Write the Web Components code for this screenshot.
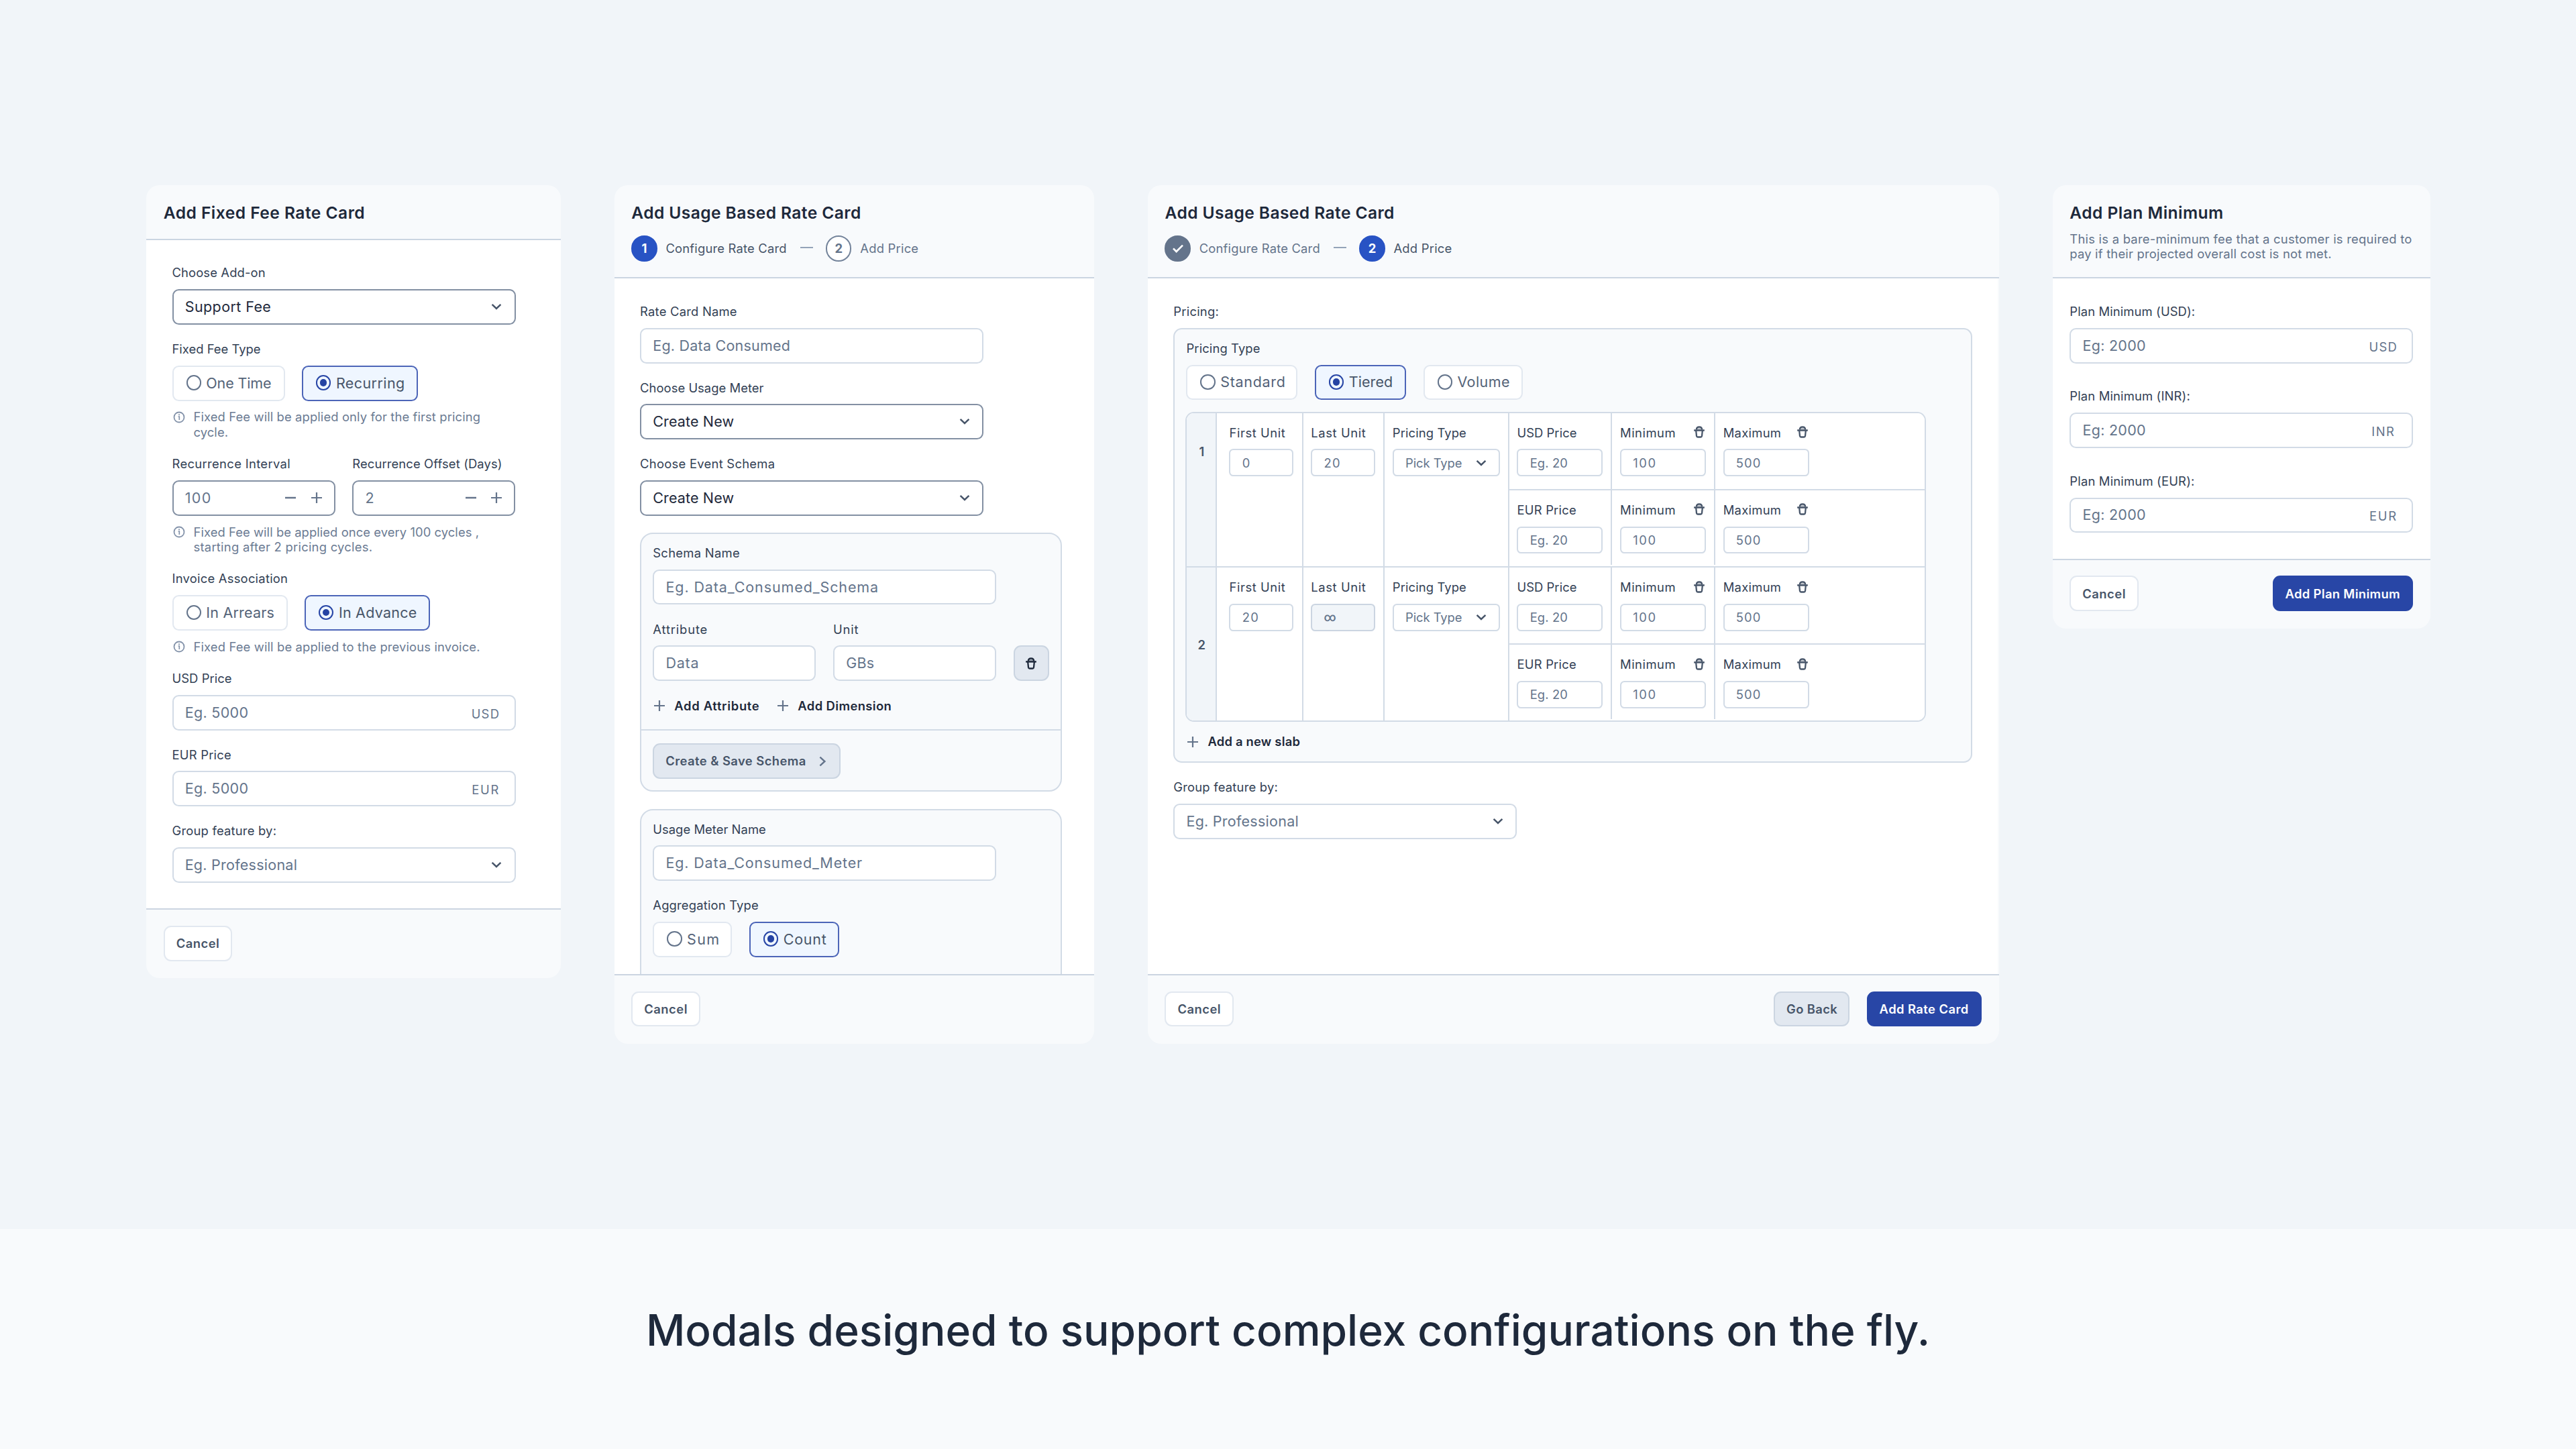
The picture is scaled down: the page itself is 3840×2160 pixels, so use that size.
<!DOCTYPE html>
<html lang="en">
<head>
<meta charset="utf-8">
<title>Rate card modals</title>
<style>
html,body{margin:0;height:100%;background:#f1f5f9}
body{font-family:Inter,Roboto,sans-serif;color:#334155}
</style>
</head>
<body>
<modal-showcase></modal-showcase>
<script>
const fits = new Set();

function define(name, css, html, hooks = {}) {
  customElements.define(name, class extends HTMLElement {
    constructor() {
      super();
      this.attachShadow({ mode: 'open' }).innerHTML =
        `<style>*{box-sizing:border-box}${css}</style>${typeof html === 'function' ? html(this) : html}`;
    }
    connectedCallback() { if (hooks.connected) hooks.connected(this); }
  });
}

/* A single line of text, tracked so that it runs to the width in its "w" attribute. */
define('fit-text',
  ':host{display:block;white-space:nowrap}span{display:inline-block}',
  '<span><slot></slot></span>',
  { connected: el => fits.add(el) });

function fitAll() {
  for (const el of fits) {
    const w = parseFloat(el.getAttribute('w'));
    const n = el.textContent.length;
    if (!w || n < 2) continue;
    const span = el.shadowRoot.querySelector('span');
    const size = parseFloat(getComputedStyle(el).fontSize);
    const ls = (w + size * 0.08 - span.getBoundingClientRect().width) / (n - 1);
    span.style.letterSpacing = ls.toFixed(3) + 'px';
    span.style.marginRight = (-ls).toFixed(3) + 'px';
  }
}

const icons = {
  down: [32, '<path d="M9.6 12.8 16 19l6.4-6.2" stroke-width="2.5"/>'],
  right: [24, '<path d="M8.4 5.6 15.4 12l-7 6.4" stroke-width="2.4"/>'],
  plus: [20, '<path d="M2 10h16M10 2v16" stroke-width="2.2"/>'],
  minus: [20, '<path d="M2 10h16" stroke-width="2.5"/>'],
  check: [24, '<path d="M5 12.4 9.6 17 19 7.6" stroke-width="2.7"/>'],
  info: [20, '<circle cx="10" cy="10" r="7.5" stroke-width="1.8"/><path d="M8.6 9h1.7v5" stroke-width="1.7"/><circle cx="10" cy="6.3" r="1.1" fill="currentColor" stroke="none"/>'],
  trash: [20, '<path d="M5.8 6.4C6 3.4 7.4 2.4 10 2.4s4 1 4.2 4" stroke-width="2.3" fill="currentColor" fill-opacity=".35"/><path d="M2.2 7.4h15.6" stroke-width="2.5"/><path d="M5.2 8l.8 7.8c.2 1.3.9 1.7 1.8 1.7h4.4c.9 0 1.6-.4 1.8-1.7l.8-7.8" stroke-width="2.3"/>']
};
define('ui-icon',
  ':host{display:inline-flex;flex:none}svg{display:block;fill:none;stroke:currentColor}',
  el => {
    const [s, body] = icons[el.getAttribute('name')] || icons.plus;
    return `<svg width="${s}" height="${s}" viewBox="0 0 ${s} ${s}">${body}</svg>`;
  });

define('modal-card', `
  :host{display:flex;flex-direction:column;flex:none;border-radius:20px;overflow:hidden;background:#f8fafc}
  header{display:flex;flex-direction:column;flex:none;height:var(--head,81.6px);padding:25.6px;border-bottom:2px solid #cbd5e1}
  main{flex:1;min-height:0;overflow:hidden;background:#fff;padding:38.4px var(--side,38.4px);margin-right:var(--trim,0);display:flex;flex-direction:column;gap:var(--gap,25.6px)}
  footer{display:flex;justify-content:space-between;flex:none;height:104px;padding:23.6px 25.6px 0;border-top:2px solid #cbd5e1}`,
  '<header><slot name="head"></slot></header><main><slot></slot></main><footer><slot name="foot"></slot></footer>');

define('modal-title', ':host{display:block;font-size:24.6px;line-height:30.4px;font-weight:600;color:#1e293b}', '<slot></slot>');
define('modal-note', ':host{display:block;margin-top:12.8px;font-size:18.4px;line-height:22.4px;color:#64748b}', '<slot></slot>');

define('step-list', ':host{display:flex;align-items:center;margin-top:19.2px;height:38.4px}', '<slot></slot>');
define('step-dash', ':host{display:block;width:19.2px;height:2px;margin:-2px 19px 0 20.4px;background:#94a3b8}', '');
define('step-item', `
  :host{display:flex;align-items:center;gap:12.8px;font-size:18.4px;line-height:22.4px;color:#64748b}
  :host([state=current]){color:#475569}
  i{display:flex;align-items:center;justify-content:center;width:38.4px;height:38.4px;border-radius:50%;font-style:normal;font-weight:650;background:#fff;border:2px solid #73839a}
  :host([state=current]) i{background:#2853c4;border-color:#2853c4;color:#fff}
  :host([state=done]) i{background:#64748b;border-color:#64748b;color:#fff}`,
  el => `<i>${el.getAttribute('state') === 'done' ? '<ui-icon name="check"></ui-icon>' : el.getAttribute('n')}</i><slot></slot>`);

define('form-field', `
  :host{display:flex;flex-direction:column;gap:12.8px}
  .l{font-size:18.4px;line-height:22.4px;height:22.4px;color:#334155;display:flex;justify-content:space-between}
  .l fit-text{margin-top:-.5px}
  .c{display:flex;gap:25.6px}
  ::slotted(ui-icon){color:#475569}`,
  el => `<div class="l"><fit-text w="${el.getAttribute('w')}">${el.getAttribute('label')}</fit-text><slot name="act"></slot></div><div class="c"><slot></slot></div><slot name="hint"></slot>`);

define('field-row', ':host{display:flex;gap:25.6px;align-items:flex-end}', '<slot></slot>');

define('text-box', `
  :host{display:flex;align-items:center;width:512px;height:52.8px;padding:0 17.2px 1px;border:2px solid #d2dbe6;border-radius:9.6px;background:#fff;font-size:21.5px;line-height:26px;color:#64748b;box-sizing:border-box}
  :host([half]){width:243.2px}
  :host([filled]){border-color:#8390a3}
  :host([dark]){color:#1e293b}
  :host([small]){width:128px;height:40.8px;font-size:18.4px;border-radius:6.4px;padding-right:10px;padding-bottom:0}
  :host([narrow]){width:96px}
  :host([muted]){background:#f1f5f9;border-color:#cbd5e1}
  :host([muted]) {font:500 17.5px/26px Roboto,sans-serif}
  .r{margin-left:auto;display:flex;align-items:center;color:#64748b}
  .cur{width:54px;display:flex;justify-content:center;font-size:18.4px;padding-top:4px;margin-right:-1px}
  .st{gap:18.3px;margin-right:-1px}
  .dn{margin-right:-7px;color:#475569}
  :host([small]) .dn{margin-right:0}`,
  el => {
    const k = el.getAttribute('kind');
    const r = k === 'select' ? '<div class="r dn"><ui-icon name="down"></ui-icon></div>'
      : k === 'stepper' ? '<div class="r st"><ui-icon name="minus"></ui-icon><ui-icon name="plus"></ui-icon></div>'
      : k ? `<div class="r cur"><fit-text w="${{ USD: 39.8, EUR: 38.6, INR: 32 }[k]}">${k}</fit-text></div>` : '';
    return `<slot></slot>${r}`;
  });

define('radio-option', `
  :host{display:flex;align-items:center;height:52.8px;padding:0 0 1px 19px;border:2px solid #e2e8f0;border-radius:9.6px;background:#fff;font-size:21.5px;line-height:26px;color:#546378;box-sizing:border-box}
  i{width:22.4px;height:22.4px;border:2.6px solid #64748b;border-radius:50%;margin-right:7.4px;display:flex;align-items:center;justify-content:center}
  :host([on]){border-color:#4c65b8;background:#eff6ff;color:#475569}
  :host([on]) i{border-color:#2846a6}
  :host([on]) i::before{content:"";width:10.4px;height:10.4px;border-radius:50%;background:#2543a3}`,
  '<i></i><slot></slot>');

define('hint-note', `
  :host{display:flex;font-size:18.4px;line-height:22.4px;color:#6b7b93}
  ui-icon{margin-top:1.2px;margin-right:12px;color:#8493aa}`,
  '<ui-icon name="info"></ui-icon><div><slot></slot></div>');

define('ui-button', `
  :host{display:flex;align-items:center;height:52.8px;padding-left:17px;border:2px solid #e2e8f0;border-radius:11px;background:#fff;font-size:18.4px;line-height:22.4px;font-weight:600;color:#475569;box-sizing:border-box}
  :host([look=soft]){background:#e2e8f0;border-color:#cbd5e1}
  :host([look=primary]){background:#2846a6;border-color:#2846a6;color:#fff}
  :host([look=trash]){width:52.8px;padding:0;justify-content:center;background:#e2e8f0;border-color:#cbd5e1;color:#1e293b}`,
  '<slot></slot>');
define('button-row', ':host{display:flex;gap:25.6px}', '<slot></slot>');

define('add-link', `
  :host{display:flex;align-items:center;font-size:18.4px;line-height:22.4px;font-weight:600;color:#1e293b}
  ui-icon{color:#64748b;margin-right:12px}`,
  '<ui-icon name="plus"></ui-icon><slot></slot>');

define('schema-panel', `
  :host{display:flex;flex-direction:column;flex:none;width:628.8px;border:2px solid #d2dbe6;border-radius:19.2px;background:#f8fafc;box-sizing:border-box}
  .b{display:flex;flex-direction:column;gap:25.6px;padding:17.2px 17.2px 24px}
  .f{display:flex;border-top:2px solid #d2dbe6;padding:19.2px 17.2px 17.2px}
  :host(:not([foot])) .f{display:none}`,
  '<div class="b"><slot></slot></div><div class="f"><slot name="foot"></slot></div>');

define('pricing-panel', `
  :host{display:flex;flex-direction:column;align-items:flex-start;height:648.4px;width:1190.4px;padding:17.6px 17.2px 0;border:2px solid #d2dbe6;border-radius:12.8px;background:#f8fafc;box-sizing:border-box}
  slab-table{margin-top:17.2px;margin-left:-1.2px}
  add-link{margin-top:18px}`, `
  <form-field label="Pricing Type" w="108.5">
    <radio-option style="width:166px"><fit-text w="95">Standard</fit-text></radio-option>
    <radio-option on style="width:136px"><fit-text w="63.6">Tiered</fit-text></radio-option>
    <radio-option style="width:148.8px"><fit-text w="76.4">Volume</fit-text></radio-option>
  </form-field>
  <slab-table></slab-table>
  <add-link><fit-text w="136">Add a new slab</fit-text></add-link>`);

define('price-row', `
  :host{display:flex;height:113.2px;flex:none}
  div{width:153.6px;border-right:2px solid #d2dbe6;padding:18.6px 0 0 11.6px}
  div:last-child{flex:1;border:0}
  form-field{width:128px}`,
  el => {
    const c = el.getAttribute('cur');
    return `<div><form-field label="${c} Price" w="${c === 'USD' ? 87.5 : 86.8}"><text-box small><fit-text w="54.8">Eg. 20</fit-text></text-box></form-field></div>
    <div><form-field label="Minimum" w="81"><ui-icon slot="act" name="trash"></ui-icon><text-box small><fit-text w="32.3">100</fit-text></text-box></form-field></div>
    <div><form-field label="Maximum" w="84.8"><ui-icon slot="act" name="trash"></ui-icon><text-box small><fit-text w="35">500</fit-text></text-box></form-field></div>`;
  });

define('slab-row', `
  :host{display:flex;height:228.4px;flex:none;background:#fff}
  :host(:not([n="1"])){border-top:2px solid #d2dbe6;height:230.4px;box-sizing:border-box}
  .c{border-right:2px solid #d2dbe6;padding:18.6px 0 0 11.6px;flex:none}
  .n{width:45px;background:#f1f5f9;padding:2px 0 0 1px;display:flex;align-items:center;justify-content:center;font-size:18.4px;line-height:22.4px;font-weight:600;color:#475569}
  :host([n="1"]) .n{align-items:flex-start;padding-top:46px}
  .p{flex:1;display:flex;flex-direction:column}
  price-row+price-row{border-top:2px solid #d2dbe6}`,
  el => {
    const first = el.getAttribute('n') === '1';
    const box = (v, x = '') => `<text-box small narrow ${x}><fit-text w="${v === '20' ? 22.8 : ''}">${v}</fit-text></text-box>`;
    return `<div class="c n">${el.getAttribute('n')}</div>
    <div class="c" style="width:128.4px;padding-left:18.2px"><form-field label="First Unit" w="81.8">${box(first ? '0' : '20')}</form-field></div>
    <div class="c" style="width:121.6px"><form-field label="Last Unit" w="80">${first ? box('20') : box('∞', 'muted')}</form-field></div>
    <div class="c" style="width:185.6px"><form-field label="Pricing Type" w="108.5"><text-box small kind="select" style="width:160px"><fit-text w="83">Pick Type</fit-text></text-box></form-field></div>
    <div class="p"><price-row cur="USD"></price-row><price-row cur="EUR"></price-row></div>`;
  });

define('slab-table',
  ':host{display:flex;flex-direction:column;width:1103.6px;height:462.8px;border:2px solid #d2dbe6;border-radius:12.8px;overflow:hidden;background:#fff;box-sizing:border-box;flex:none}',
  '<slab-row n="1"></slab-row><slab-row n="2"></slab-row>');

define('page-caption', `
  :host{display:flex;justify-content:center;flex:1;padding-top:112px;background:#f8fafc;box-sizing:border-box;font:500 64px/78px Inter,sans-serif;color:#1e293b}`,
  '<slot></slot>');

define('form-field-pair',
  ':host{display:flex;flex-direction:column;gap:12.8px}', `
  <field-row>
    <form-field label="Recurrence Interval" w="174.7"><text-box half kind="stepper" filled><fit-text w="37">100</fit-text></text-box></form-field>
    <form-field label="Recurrence Offset (Days)" w="221.8"><text-box half kind="stepper" filled><fit-text>2</fit-text></text-box></form-field>
  </field-row>
  <hint-note><fit-text w="424">Fixed Fee will be applied once every 100 cycles ,</fit-text><fit-text w="265">starting after 2 pricing cycles.</fit-text></hint-note>`);

define('modal-showcase', `
  :host{display:flex;flex-direction:column;width:3840px;height:2160px;overflow:hidden}
  .stage{display:flex;align-items:flex-start;justify-content:center;gap:80px;height:1832px;padding:276px 0 0 1px;background:#f1f5f9}
  .fixed{width:617.6px;height:1182.4px}
  .usage{width:715.2px;height:1280px;--head:139.2px}
  .price{width:1268.8px;height:1280px;--head:139.2px;--trim:1.6px}
  .plan{width:563.2px;height:660.8px;--head:139.2px;--side:25.6px;--gap:38.4px}
  ui-button[cancel]{width:102.4px}`, `
  <div class="stage">
    <modal-card class="fixed">
      <modal-title slot="head"><fit-text w="298">Add Fixed Fee Rate Card</fit-text></modal-title>
      <form-field label="Choose Add-on" w="137.6"><text-box kind="select" filled dark><fit-text w="126.5">Support Fee</fit-text></text-box></form-field>
      <form-field label="Fixed Fee Type" w="130.6">
        <radio-option style="width:168px"><fit-text w="95.5">One Time</fit-text></radio-option>
        <radio-option on style="width:173px"><fit-text w="100.6">Recurring</fit-text></radio-option>
        <hint-note slot="hint"><fit-text w="426">Fixed Fee will be applied only for the first pricing</fit-text><fit-text w="50">cycle.</fit-text></hint-note>
      </form-field>
      <form-field-pair></form-field-pair>
      <form-field label="Invoice Association" w="171">
        <radio-option style="width:172px"><fit-text w="99.8">In Arrears</fit-text></radio-option>
        <radio-option on style="width:187.2px"><fit-text w="114.6">In Advance</fit-text></radio-option>
        <hint-note slot="hint"><fit-text w="425.5">Fixed Fee will be applied to the previous invoice.</fit-text></hint-note>
      </form-field>
      <form-field label="USD Price" w="87.5"><text-box kind="USD"><fit-text w="92.6">Eg. 5000</fit-text></text-box></form-field>
      <form-field label="EUR Price" w="86.8"><text-box kind="EUR"><fit-text w="92.6">Eg. 5000</fit-text></text-box></form-field>
      <form-field label="Group feature by:" w="154"><text-box kind="select"><fit-text w="165.5">Eg. Professional</fit-text></text-box></form-field>
      <ui-button slot="foot" cancel><fit-text w="62.7">Cancel</fit-text></ui-button>
    </modal-card>

    <modal-card class="usage">
      <modal-title slot="head"><fit-text w="340">Add Usage Based Rate Card</fit-text></modal-title>
      <step-list slot="head">
        <step-item n="1" state="current"><fit-text w="178.5">Configure Rate Card</fit-text></step-item>
        <step-dash></step-dash>
        <step-item n="2"><fit-text w="85.4">Add Price</fit-text></step-item>
      </step-list>
      <form-field label="Rate Card Name" w="143"><text-box><fit-text w="203">Eg. Data Consumed</fit-text></text-box></form-field>
      <form-field label="Choose Usage Meter" w="183"><text-box kind="select" filled dark><fit-text w="119">Create New</fit-text></text-box></form-field>
      <form-field label="Choose Event Schema" w="199.5"><text-box kind="select" filled dark><fit-text w="119">Create New</fit-text></text-box></form-field>
      <schema-panel foot>
        <form-field label="Schema Name" w="128"><text-box><fit-text w="315">Eg. Data_Consumed_Schema</fit-text></text-box></form-field>
        <field-row>
          <form-field label="Attribute" w="79.6"><text-box half><fit-text w="47.4">Data</fit-text></text-box></form-field>
          <form-field label="Unit" w="36"><text-box half><fit-text w="40.2">GBs</fit-text></text-box></form-field>
          <ui-button look="trash"><ui-icon name="trash"></ui-icon></ui-button>
        </field-row>
        <field-row>
          <add-link><fit-text w="125">Add Attribute</fit-text></add-link>
          <add-link><fit-text w="138">Add Dimension</fit-text></add-link>
        </field-row>
        <ui-button slot="foot" look="soft" style="width:280px"><fit-text w="207.6">Create &amp; Save Schema</fit-text><ui-icon name="right" style="margin-left:12.4px;color:#64748b"></ui-icon></ui-button>
      </schema-panel>
      <schema-panel>
        <form-field label="Usage Meter Name" w="167"><text-box><fit-text w="291">Eg. Data_Consumed_Meter</fit-text></text-box></form-field>
        <form-field label="Aggregation Type" w="156">
          <radio-option style="width:118px"><fit-text w="46.4">Sum</fit-text></radio-option>
          <radio-option on style="width:134.4px"><fit-text w="62.4">Count</fit-text></radio-option>
        </form-field>
        <field-row style="height:80px"></field-row>
      </schema-panel>
      <ui-button slot="foot" cancel><fit-text w="62.7">Cancel</fit-text></ui-button>
    </modal-card>

    <modal-card class="price">
      <modal-title slot="head"><fit-text w="340">Add Usage Based Rate Card</fit-text></modal-title>
      <step-list slot="head">
        <step-item n="1" state="done"><fit-text w="178.5">Configure Rate Card</fit-text></step-item>
        <step-dash></step-dash>
        <step-item n="2" state="current"><fit-text w="85.4">Add Price</fit-text></step-item>
      </step-list>
      <form-field label="Pricing:" w="66"><pricing-panel></pricing-panel></form-field>
      <form-field label="Group feature by:" w="154"><text-box kind="select"><fit-text w="165.5">Eg. Professional</fit-text></text-box></form-field>
      <ui-button slot="foot" cancel><fit-text w="62.7">Cancel</fit-text></ui-button>
      <button-row slot="foot">
        <ui-button look="soft" style="width:113px"><fit-text w="74.3">Go Back</fit-text></ui-button>
        <ui-button look="primary" style="width:171.5px"><fit-text w="131.2">Add Rate Card</fit-text></ui-button>
      </button-row>
    </modal-card>

    <modal-card class="plan">
      <modal-title slot="head"><fit-text w="227">Add Plan Minimum</fit-text></modal-title>
      <modal-note slot="head"><fit-text w="508.5">This is a bare-minimum fee that a customer is required to</fit-text><fit-text w="388.8">pay if their projected overall cost is not met.</fit-text></modal-note>
      <form-field label="Plan Minimum (USD):" w="185.4"><text-box kind="USD"><fit-text w="92.4">Eg: 2000</fit-text></text-box></form-field>
      <form-field label="Plan Minimum (INR):" w="178"><text-box kind="INR"><fit-text w="92.4">Eg: 2000</fit-text></text-box></form-field>
      <form-field label="Plan Minimum (EUR):" w="184.6"><text-box kind="EUR"><fit-text w="92.4">Eg: 2000</fit-text></text-box></form-field>
      <ui-button slot="foot" cancel><fit-text w="62.7">Cancel</fit-text></ui-button>
      <ui-button slot="foot" look="primary" style="width:209.7px"><fit-text w="169.5">Add Plan Minimum</fit-text></ui-button>
    </modal-card>
  </div>
  <page-caption><fit-text w="1909">Modals designed to support complex configurations on the fly.</fit-text></page-caption>`);

fitAll();
</script>
</body>
</html>
